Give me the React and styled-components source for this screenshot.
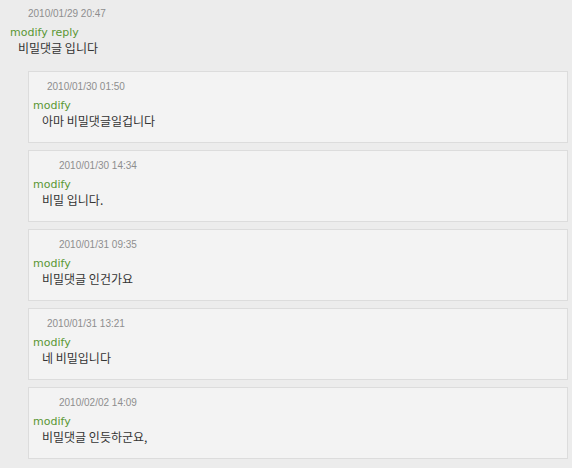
import React from 'react';
import styled, { createGlobalStyle } from 'styled-components';

const GlobalStyle = createGlobalStyle`
  html, body {
    margin: 0;
    padding: 0;
    background: #ececec;
  }
`;

const Page = styled.div`
  width: 572px;
  height: 468px;
  overflow: hidden;
  background: #ececec;
  font-family: "Liberation Sans", Arial, sans-serif;
`;

const Head = styled.div`
  padding-top: 6px;
  display: flex;
  flex-direction: column;
`;

const Stamp = styled.div`
  font-family: "Liberation Sans", Arial, sans-serif;
  font-size: 10px;
  line-height: 16px;
  height: 16px;
  color: #8e8e8e;
  padding-left: ${(p) => p.indent}px;
`;

const Links = styled.div`
  font-family: "DejaVu Sans", Verdana, sans-serif;
  font-size: 11px;
  line-height: 17px;
  height: 15px;
  padding-top: 2px;
  color: #5a9734;
  padding-left: ${(p) => p.indent}px;
`;

const Body = styled.div`
  font-family: "Noto Sans CJK KR", "Noto Sans", sans-serif;
  font-size: 12px;
  line-height: 17px;
  height: 17px;
  color: #333333;
  padding-left: ${(p) => p.indent}px;
`;

const Replies = styled.div`
  display: flex;
  flex-direction: column;
  gap: 7px;
  margin: 15px 4px 0 28px;
`;

const Card = styled.div`
  box-sizing: border-box;
  height: 72px;
  background: #f3f3f3;
  border: 1px solid #dcdcdc;
  padding: 7px 0 0 4px;
  display: flex;
  flex-direction: column;
`;

const replies = [
  { date: '2010/01/30 01:50', indent: 14, text: '아마 비밀댓글일겁니다' },
  { date: '2010/01/30 14:34', indent: 26, text: '비밀 입니다.' },
  { date: '2010/01/31 09:35', indent: 26, text: '비밀댓글 인건가요' },
  { date: '2010/01/31 13:21', indent: 14, text: '네 비밀입니다' },
  { date: '2010/02/02 14:09', indent: 26, text: '비밀댓글 인듯하군요,' },
];

export default function App() {
  return (
    <Page>
      <GlobalStyle />
      <Head>
        <Stamp indent={28}>2010/01/29 20:47</Stamp>
        <Links indent={10}>modify reply</Links>
        <Body indent={18}>비밀댓글 입니다</Body>
      </Head>
      <Replies>
        {replies.map((r) => (
          <Card key={r.date}>
            <Stamp indent={r.indent}>{r.date}</Stamp>
            <Links indent={0}>modify</Links>
            <Body indent={9}>{r.text}</Body>
          </Card>
        ))}
      </Replies>
    </Page>
  );
}
